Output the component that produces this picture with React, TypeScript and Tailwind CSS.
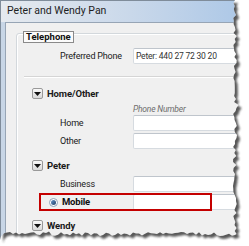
import React from "react";

// jagged "torn paper" outline for the right and bottom edge
function makeTear() {
  let seed = 7;
  const rnd = () => {
    seed = (seed * 9301 + 49297) % 233280;
    return seed / 233280;
  };
  const pts: string[] = ["0,0"];
  for (let y = 0; y <= 234; y += 3) {
    const x = 235 + (rnd() - 0.5) * 4 + (rnd() > 0.85 ? (rnd() - 0.5) * 5 : 0);
    pts.push(`${x.toFixed(1)},${y}`);
  }
  for (let x = 235; x >= 0; x -= 3) {
    const y = 234 + (rnd() - 0.5) * 4 + (rnd() > 0.85 ? (rnd() - 0.5) * 5 : 0);
    pts.push(`${x},${y.toFixed(1)}`);
  }
  pts.push("0,240");
  return "M" + pts.join(" L") + " Z";
}

const paper = makeTear();
const outer = "M-10,-10 H260 V260 H-10 Z ";

function Toggle() {
  return (
    <div className="w-[11px] h-[11px] shrink-0 rounded-[2px] border border-[#999] bg-gradient-to-b from-[#f9f9f9] to-[#d8d8d8] flex items-center justify-center">
      <svg width="7" height="4" viewBox="0 0 7 4">
        <path d="M0 0 H7 L3.5 4 Z" fill="#111" />
      </svg>
    </div>
  );
}

function TextBox({ value }: { value?: string }) {
  return (
    <div className="flex-1 h-[16px] rounded-[2px] border border-[#d6dbe0] border-t-[#bfc5cc] bg-white flex items-center pl-[2px] text-[8.5px] tracking-[-0.2px] text-[#333]">
      {value}
    </div>
  );
}

function Field({ label, value }: { label: string; value?: string }) {
  return (
    <div className="flex items-center">
      <div className="w-[116px] shrink-0 pl-[43px] text-[#1a1a1a]">{label}</div>
      <TextBox value={value} />
    </div>
  );
}

function Header({ title }: { title: string }) {
  return (
    <div className="flex items-center h-[11px] pl-[15px] gap-[4px]">
      <Toggle />
      <span className="font-bold text-[9.5px] tracking-[-0.1px] text-[#1a1a1a]">{title}</span>
    </div>
  );
}

export default function App() {
  return (
    <div className="relative w-[249px] h-[246px] overflow-hidden bg-white font-['Roboto',sans-serif] text-[9px] tracking-[-0.2px] leading-none">
      {/* window */}
      <div className="w-[262px] h-[246px] flex flex-col border border-[#7f8c9a] bg-[#c8d6e6]">
        <div className="h-[21px] shrink-0 flex items-center pl-[6px] bg-gradient-to-r from-[#e6eaef] via-[#c9d8ea] to-[#a8c5e6] text-[10.5px] tracking-normal text-[#1e1e1e]">
          Peter and Wendy Pan
        </div>
        <div className="flex-1 min-h-0 ml-[4px] border border-[#97a5b5] bg-[#f0f0f0] pt-[10px] pl-[10px]">
          {/* group box */}
          <div className="relative h-[260px] rounded-[3px] border border-[#d3d8dc] shadow-[inset_1px_1px_0_#fff] pt-[14px]">
            <div className="absolute left-[6px] -top-[3px] border border-[#8a8a8a] bg-[#fbfbfb] px-[2px] h-[12px] flex items-center font-bold text-[9.5px] tracking-normal text-[#111]">
              Telephone
            </div>

            <Field label="Preferred Phone" value="Peter: 440 27 72 30 20" />

            <div className="ml-[7px] mt-[12px] h-[2px] border-t border-[#d5d5d5] border-b border-b-white" />

            <div className="mt-[10px]">
              <Header title="Home/Other" />
            </div>
            <div className="mt-[6px] h-[10px] pl-[116px] italic text-[8.5px] text-[#6d6d6d]">
              Phone Number
            </div>
            <Field label="Home" />
            <div className="mt-[2px]">
              <Field label="Other" />
            </div>

            <div className="mt-[11px]">
              <Header title="Peter" />
            </div>
            <div className="mt-[5px]">
              <Field label="Business" />
            </div>
            <div className="relative mt-[2px] flex items-center">
              <div className="w-[116px] shrink-0 pl-[32px] flex items-center gap-[4px]">
                <div className="w-[9px] h-[9px] rounded-full border border-[#8ea2b8] bg-white flex items-center justify-center">
                  <div className="w-[5px] h-[5px] rounded-full bg-gradient-to-br from-[#6c9ad0] to-[#1f3f66]" />
                </div>
                <span className="font-bold text-[9.5px] text-[#111]">Mobile</span>
              </div>
              <TextBox />
              <div className="absolute left-[22px] -top-[1px] w-[173px] h-[18px] border-2 border-[#c40000]" />
            </div>

            <div className="mt-[10px]">
              <Header title="Wendy" />
            </div>
          </div>
        </div>
      </div>

      {/* torn edge */}
      <svg className="absolute inset-0" width="249" height="246" viewBox="0 0 249 246">
        <defs>
          <clipPath id="outside">
            <path clipRule="evenodd" d={outer + paper} />
          </clipPath>
          <filter id="blur" x="-10%" y="-10%" width="120%" height="120%">
            <feGaussianBlur stdDeviation="1.2" />
          </filter>
        </defs>
        <path d={outer + paper} fill="#fff" fillRule="evenodd" />
        <g clipPath="url(#outside)">
          <path d={paper} transform="translate(3,3)" fill="#3a3a3a" opacity="0.85" filter="url(#blur)" />
        </g>
      </svg>
    </div>
  );
}
